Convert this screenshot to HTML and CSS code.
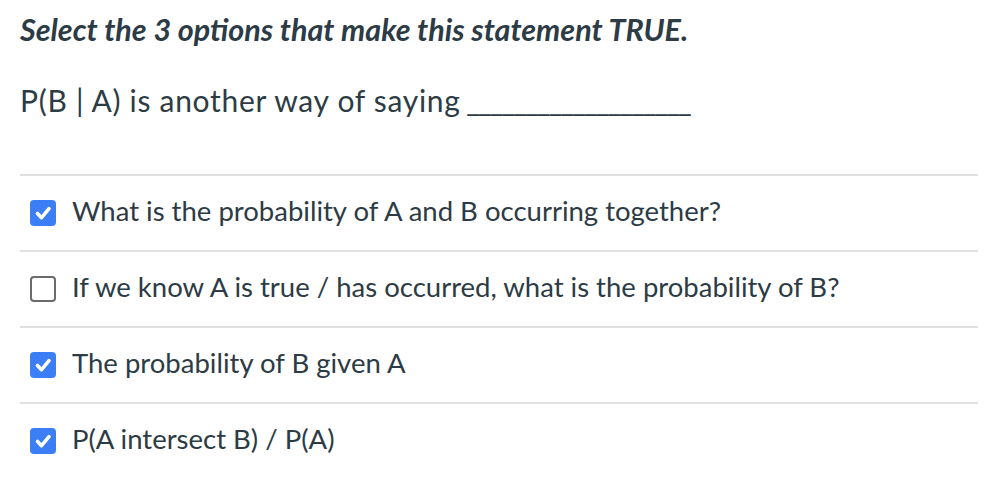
FILE: index.html
```html
<!DOCTYPE html>
<html>
<head>
<meta charset="utf-8">
<link rel="stylesheet" href="styles.css">
</head>
<body>
<div class="question">
  <h1 class="prompt">Select the 3 options that make this statement TRUE.</h1>
  <p class="statement">P(B | A) is another way of saying<span class="blank"> ___________________</span></p>
  <ul class="options">
    <li class="option">
      <span class="box checked"><svg viewBox="0 0 26 26" width="26" height="26"><path d="M7.5 13.5l4 4.2 7.5-9" fill="none" stroke="#fff" stroke-width="3.6" stroke-linecap="round" stroke-linejoin="round"/></svg></span>
      <span class="label">What is the probability of A and B occurring together?</span>
    </li>
    <li class="option">
      <span class="box"></span>
      <span class="label">If we know A is true / has occurred, what is the probability of B?</span>
    </li>
    <li class="option">
      <span class="box checked"><svg viewBox="0 0 26 26" width="26" height="26"><path d="M7.5 13.5l4 4.2 7.5-9" fill="none" stroke="#fff" stroke-width="3.6" stroke-linecap="round" stroke-linejoin="round"/></svg></span>
      <span class="label">The probability of B given A</span>
    </li>
    <li class="option">
      <span class="box checked"><svg viewBox="0 0 26 26" width="26" height="26"><path d="M7.5 13.5l4 4.2 7.5-9" fill="none" stroke="#fff" stroke-width="3.6" stroke-linecap="round" stroke-linejoin="round"/></svg></span>
      <span class="label">P(A intersect B) / P(A)</span>
    </li>
  </ul>
</div>
</body>
</html>
```

FILE: styles.css
```css
html, body {
  margin: 0;
  padding: 0;
  background: #fff;
}
body {
  font-family: Lato, "Open Sans", sans-serif;
  color: #2d3b45;
}
.question {
  width: 958px;
  padding: 11px 0 0 20px;
}
.prompt {
  margin: 0;
  font-size: 30.5px;
  line-height: 36px;
  font-weight: 700;
  font-style: italic;
}
.statement {
  margin: 35px 0 0 0;
  font-size: 30px;
  line-height: 36px;
  font-weight: 400;
  letter-spacing: 0.7px;
}
.blank {
  letter-spacing: -2px;
}
.options {
  list-style: none;
  margin: 56px 0 0 0;
  padding: 0;
}
.option {
  box-sizing: border-box;
  height: 76px;
  border-top: 2px solid #e0e0e0;
  display: flex;
  align-items: center;
  padding-left: 10px;
  gap: 16px;
}
.box {
  box-sizing: border-box;
  width: 26px;
  height: 26px;
  border-radius: 4px;
  border: 2px solid #6b6b6b;
  background: #fff;
  display: flex;
  flex: none;
}
.box.checked {
  border: none;
  background: #3b7ef5;
}
.label {
  font-size: 27.5px;
  line-height: 32px;
  margin-bottom: 4px;
}
```
